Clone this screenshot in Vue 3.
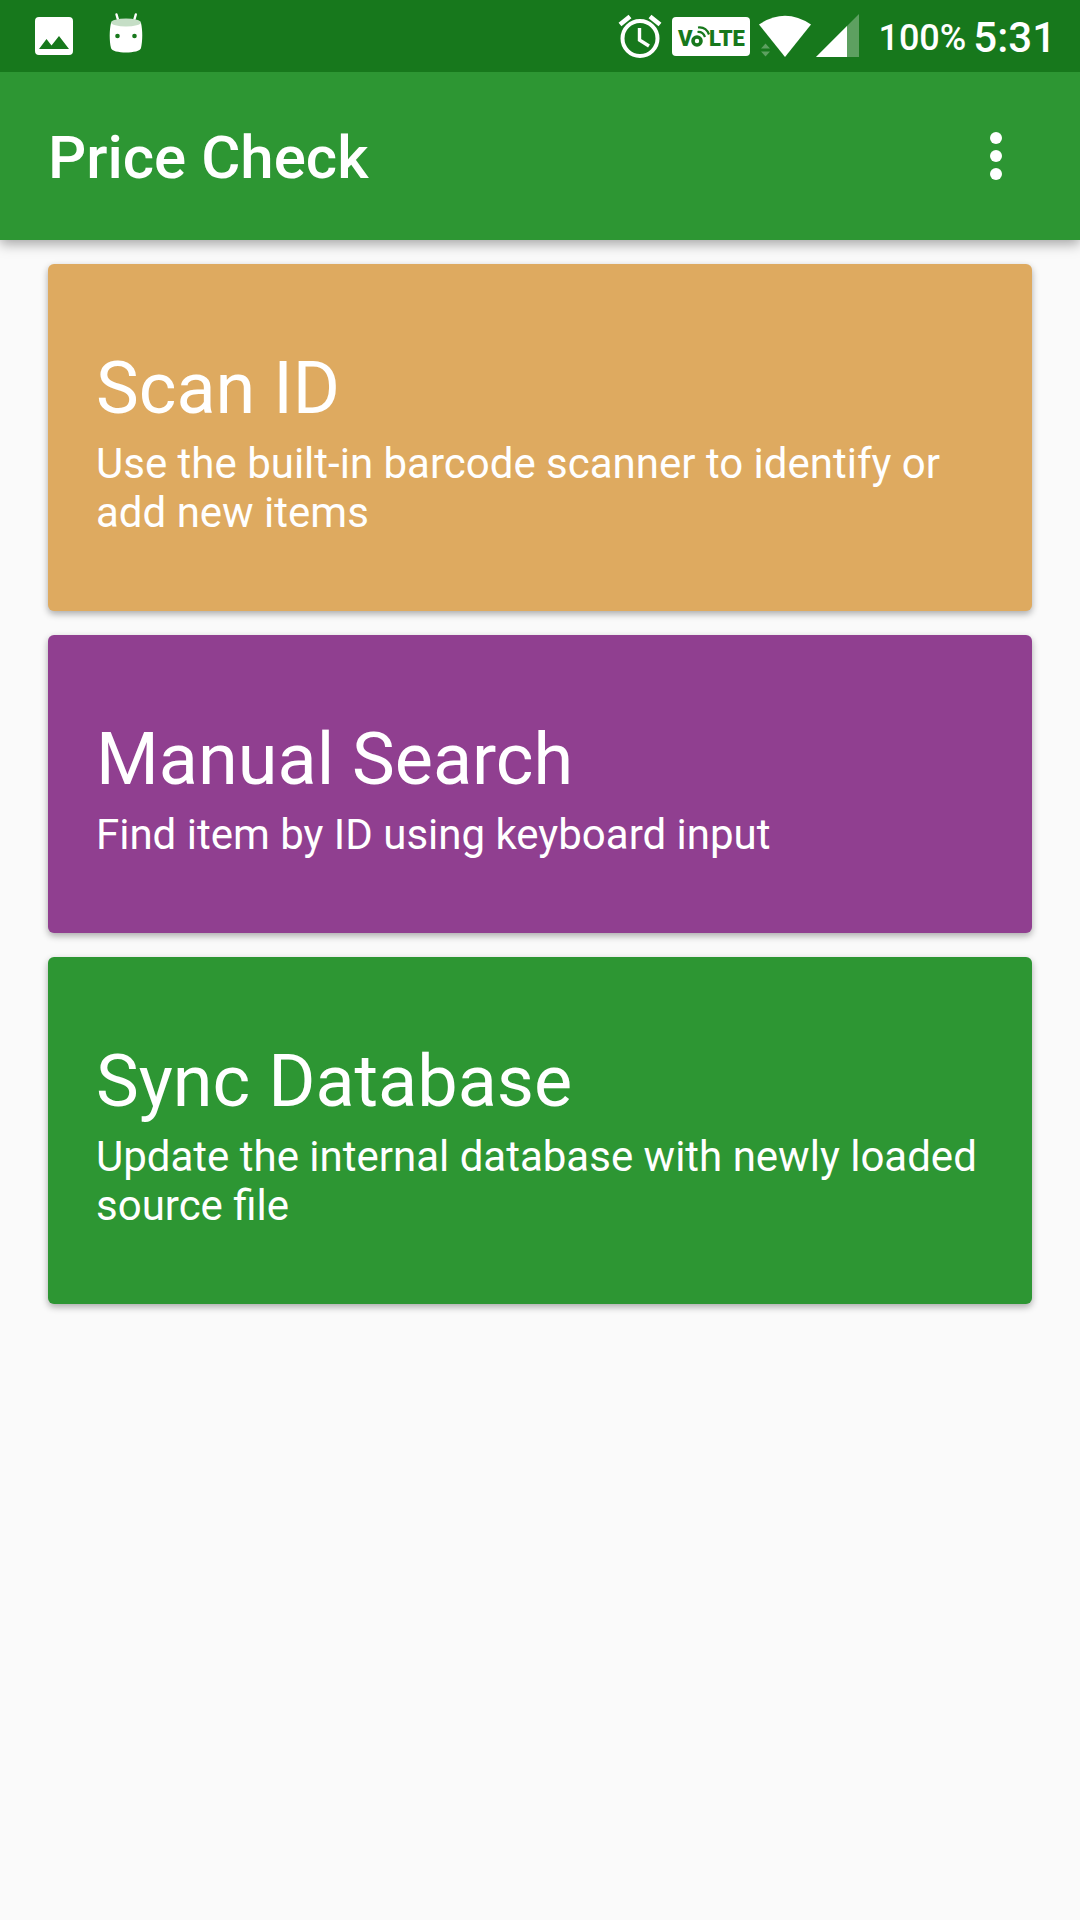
<script setup>
const actions = [
  { id: 'scan', title: 'Scan ID', text: 'Use the built-in barcode scanner to identify or add new items' },
  { id: 'search', title: 'Manual Search', text: 'Find item by ID using keyboard input' },
  { id: 'sync', title: 'Sync Database', text: 'Update the internal database with newly loaded source file' },
]
</script>

<template>
  <div class="screen">
    <div class="status-bar">
      <div class="notifications">
        <svg width="38" height="38" viewBox="0 0 38 38" aria-hidden="true">
          <path fill="#fff" fill-rule="evenodd" d="M4 0h30a4 4 0 0 1 4 4v30a4 4 0 0 1-4 4H4a4 4 0 0 1-4-4V4a4 4 0 0 1 4-4zM4 32h30L24 19l-7.500 9.500L11.500 22z" />
        </svg>
        <svg width="34" height="42" viewBox="0 0 34 42" aria-hidden="true">
          <path stroke="#fff" stroke-width="2.400" stroke-linecap="round" d="M7.500 1.500l2.300 8M26.800 1.500l-2.300 8" />
          <path fill="#fff" d="M2 10C.3 17 .3 28 2 35c1 6 29 6 30 0 1.700-7 1.700-18 0-25z" />
          <ellipse cx="17" cy="9.500" rx="15" ry="4" fill="#c5dec6" />
          <circle cx="8.500" cy="23" r="2.300" fill="#17781c" />
          <circle cx="25.500" cy="23" r="2.300" fill="#17781c" />
        </svg>
      </div>
      <div class="indicators">
        <svg class="alarm" width="44" height="44" viewBox="0 0 44 44" fill="none" stroke="#fff" aria-hidden="true">
          <circle cx="22" cy="25.500" r="17.500" stroke-width="4" />
          <path stroke-width="3.400" d="M21.500 15v12l9.500 6" />
          <path stroke-width="4.600" d="M2 11.500L12 3.500M42 11.500L32 3.500" />
        </svg>
        <svg class="volte" width="78" height="39" viewBox="0 0 78 39">
          <rect width="78" height="39" rx="4" fill="#fff" />
          <g fill="#17781c" class="volte-text">
            <text x="6" y="29">V</text>
            <text x="37" y="29">LTE</text>
          </g>
          <circle cx="25" cy="24" r="4" fill="none" stroke="#17781c" stroke-width="3.600" />
          <path fill="none" stroke="#17781c" stroke-width="2.200" d="M26 10.500q8-1 11 7M25.500 15q5.500-.5 7.500 5" />
        </svg>
        <svg class="wifi" width="52" height="42" viewBox="0 0 52 42" aria-hidden="true">
          <path fill="#fff" d="M0 9.500Q26-8 52 9.500L26 42z" />
          <path fill="#5da060" d="M2 33.500l4.500-5 4.500 5zM2 36.500h9l-4.500 5z" />
        </svg>
        <svg class="signal" width="43" height="43" viewBox="0 0 43 43" aria-hidden="true">
          <path fill="#5da060" d="M0 43L43 0v43z" />
          <path fill="#fff" d="M0 43L31 12v31z" />
        </svg>
        <span class="battery">100%</span>
        <span class="clock">5:31</span>
      </div>
    </div>

    <header class="app-bar">
      <h1>Price Check</h1>
      <button class="overflow" type="button" aria-label="More options">
        <svg width="12" height="48" viewBox="0 0 12 48" fill="#fff" aria-hidden="true">
          <circle cx="6" cy="6" r="6" />
          <circle cx="6" cy="24" r="6" />
          <circle cx="6" cy="42" r="6" />
        </svg>
      </button>
    </header>

    <main class="actions">
      <button v-for="a in actions" :key="a.id" type="button" class="card" :class="a.id">
        <span class="title">{{ a.title }}</span>
        <span class="text">{{ a.text }}</span>
      </button>
    </main>
  </div>
</template>

<style>
body {
  margin: 0;
  background: #fafafa;
}
</style>

<style scoped>
.screen {
  min-height: 100vh;
  background: #fafafa;
  color: #fff;
  font-family: Roboto, "Noto Sans", sans-serif;
}

svg {
  display: block;
  flex: none;
}

.status-bar {
  position: relative;
  z-index: 2;
  display: flex;
  justify-content: space-between;
  align-items: flex-start;
  height: 72px;
  padding: 0 24px 0 35px;
  box-sizing: border-box;
  background: #17781c;
}

.notifications {
  display: flex;
  align-items: flex-end;
  gap: 36px;
  height: 55px;
}

.indicators {
  display: flex;
  align-items: flex-end;
  height: 57px;
  font-weight: 500;
}

.alarm {
  overflow: visible;
}

.volte {
  margin: 0 9px 1px 10px;
}

.volte-text {
  font-family: Roboto, sans-serif;
  font-size: 22px;
  font-weight: 900;
}

.signal {
  margin-left: 5px;
}

.battery {
  margin-left: 19px;
  font-size: 36px;
  line-height: 38px;
}

.clock {
  margin-left: 7px;
  font-size: 42px;
  line-height: 38px;
}

.app-bar {
  position: relative;
  display: flex;
  justify-content: space-between;
  align-items: center;
  height: 168px;
  padding: 0 48px;
  box-sizing: border-box;
  background: #2d9633;
  box-shadow: 0 4px 12px rgba(0, 0, 0, 0.35);
}

.app-bar h1 {
  margin: 0;
  padding-top: 4px;
  font-size: 60px;
  font-weight: 500;
  line-height: 72px;
}

.overflow {
  display: flex;
  align-items: center;
  justify-content: center;
  width: 72px;
  height: 96px;
  padding: 0;
  border: 0;
  background: none;
}

.actions {
  display: flex;
  flex-direction: column;
  gap: 24px;
  padding: 24px 48px;
}

.card {
  display: flex;
  flex-direction: column;
  gap: 8px;
  padding: 83px 48px 74px;
  border: 0;
  border-radius: 6px;
  color: inherit;
  font-family: inherit;
  text-align: left;
  box-shadow: 0 3px 7px rgba(0, 0, 0, 0.32);
}

.title {
  font-size: 72px;
  line-height: 84px;
}

.text {
  font-size: 42px;
  line-height: 49px;
}

.scan {
  background: #deaa60;
}

.search {
  background: #903f90;
}

.sync {
  background: #2d9633;
}
</style>
